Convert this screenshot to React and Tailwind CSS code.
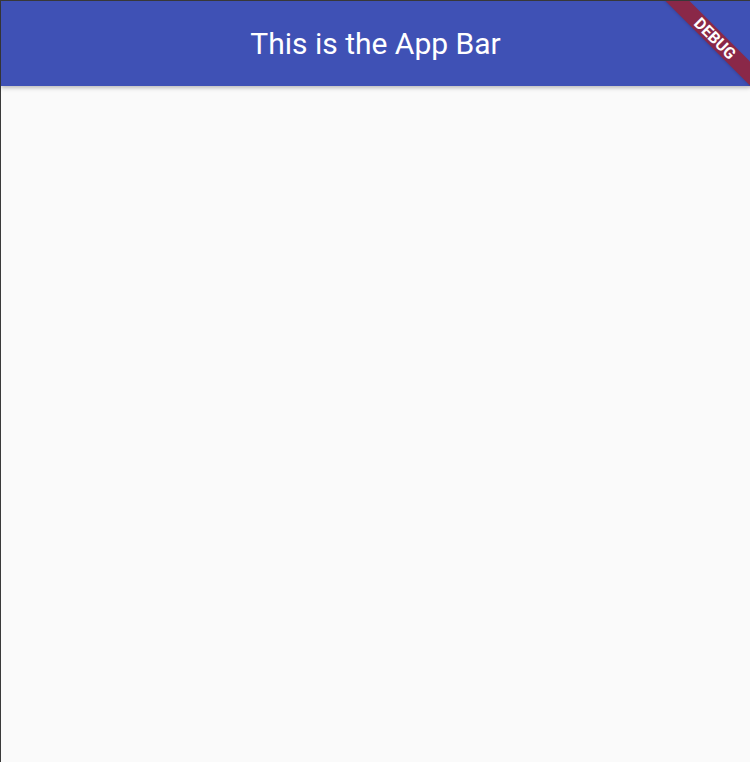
import React from 'react'

const DebugBanner = () => (
  <div className="absolute top-0 right-0 z-20 w-[90px] h-[90px] overflow-hidden pointer-events-none">
    <div className="absolute left-[-15px] top-[29px] w-[140px] h-[17px] rotate-45 bg-[#8a2848] flex items-center justify-center shadow-sm">
      <span className="text-white text-[16px] font-bold leading-none font-['Roboto',sans-serif]">
        DEBUG
      </span>
    </div>
  </div>
)

export default function App() {
  return (
    <div className="relative h-screen w-full flex flex-col bg-[#fafafa] border-t border-l border-[#3a3a3a] font-['Roboto','Liberation_Sans',sans-serif]">
      {/* app bar */}
      <header className="h-[85px] shrink-0 bg-[#3f51b5] flex items-center justify-center shadow-[0_2px_4px_rgba(0,0,0,0.25)] z-10">
        <h1 className="text-white text-[30px] font-normal leading-none">This is the App Bar</h1>
      </header>
      <main className="flex-1" />
      <DebugBanner />
    </div>
  )
}
